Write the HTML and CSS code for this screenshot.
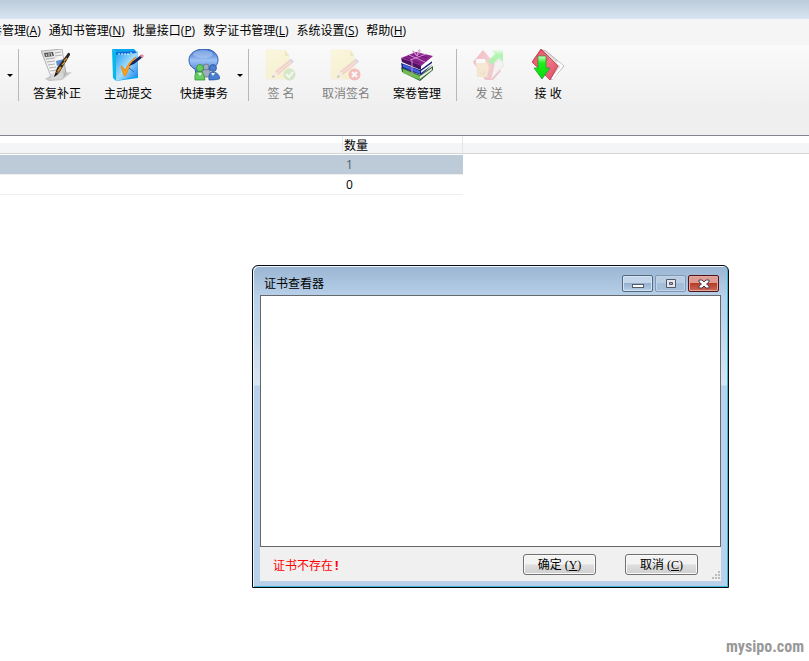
FILE: index.html
```
<!DOCTYPE html>
<html lang="zh-CN">
<head>
<meta charset="utf-8">
<title>证书查看器</title>
<link rel="stylesheet" href="styles.css">
</head>
<body>
<svg class="defs" aria-hidden="true">
  <defs>
    <linearGradient id="paper" x1="0" y1="0" x2="1" y2="1"><stop offset="0" stop-color="#d4d4d4"/><stop offset=".55" stop-color="#f8f8f8"/><stop offset="1" stop-color="#a8a8a8"/></linearGradient>
    <linearGradient id="blue" x1="0" y1="0" x2="1" y2="1"><stop offset="0" stop-color="#1a9cf4"/><stop offset=".5" stop-color="#a3dcfc"/><stop offset="1" stop-color="#0878e8"/></linearGradient>
    <linearGradient id="bubble" x1="0" y1="0" x2="0" y2="1"><stop offset="0" stop-color="#2c62c4"/><stop offset=".45" stop-color="#9fc2f4"/><stop offset="1" stop-color="#3a72d0"/></linearGradient>
    <linearGradient id="note" x1="0" y1="0" x2="1" y2="1"><stop offset="0" stop-color="#fff3a0"/><stop offset="1" stop-color="#fbe27c"/></linearGradient>
    <linearGradient id="green" x1="0" y1="0" x2="0" y2="1"><stop offset="0" stop-color="#d4fbd0"/><stop offset=".3" stop-color="#1ff01c"/><stop offset="1" stop-color="#04d80a"/></linearGradient>
    <linearGradient id="red" x1="0" y1="0" x2="1" y2="1"><stop offset="0" stop-color="#d8283c"/><stop offset=".5" stop-color="#f0788a"/><stop offset="1" stop-color="#d8485c"/></linearGradient>
    <g id="signed-note">
      <path d="M1 1h19l4 5v24H1z" fill="url(#note)" stroke="#f1dc8c" stroke-width=".6"/>
      <path d="M20 1v6h4z" fill="#d9bd56"/>
      <path d="M7 29l3-7L25 10l3 3L13 26z" fill="#f5a080"/>
      <path d="M11 23L26 11M13 25L28 13" stroke="#b86848" stroke-width=".8"/>
      <path d="M7 29l3-7 3 4z" fill="#f5ddc0"/><path d="M7 29l1-3 2 1.600z" fill="#444"/>
      <path d="M24 11l2-1.500 3 3-2 1.500z" fill="#8e98b8"/>
    </g>
  </defs>
</svg>

<div class="app">
  <header class="caption"></header>
  <nav class="menu" aria-label="主菜单">
    <a href="#">案卷管理(<u>A</u>)</a>
    <a href="#">通知书管理(<u>N</u>)</a>
    <a href="#">批量接口(<u>P</u>)</a>
    <a href="#">数字证书管理(<u>L</u>)</a>
    <a href="#">系统设置(<u>S</u>)</a>
    <a href="#">帮助(<u>H</u>)</a>
  </nav>

  <div class="toolbar" role="toolbar">
    <button class="arrow" type="button" aria-label="更多"></button>
    <span class="rule"></span>
    <button class="tool" type="button">
      <svg viewBox="0 0 32 32"><path d="M4 30L12 25 31 23 21 31 8 32z" fill="#aaa" opacity=".6"/><path d="M0 2L21 0 25 24 22 28 9 31Q11 29 9 25z" fill="url(#paper)" stroke="#999" stroke-width=".7"/><path d="M9 25L22 24Q24 28 20 30L8 31Q11 29 9 25" fill="#d8d8d8"/><path d="M3 4l9-1 1 4-9 1z" fill="#555"/><path d="M5 5l1 2M8 4v3M10 4l1 3" stroke="#ddd"/><path d="M14 4l6-1M14 7l7-1M5 10l9-1M6 13l8-1M7 16l7-1M8 19l7-1M9 22l8-1" stroke="#aaa" stroke-width=".9"/><path d="M15 12l8-2 1 4-8 3z" fill="#5d8ccc"/><path d="M13 28l3-9L27 4q2-1 2 2L18 24z" fill="#282420"/><path d="M15 24l4-7 2 2-4 6z" fill="#8a6228"/><path d="M21 16l3-3M23 12l3-3M17 22l3-4" stroke="#e29a32" stroke-width="1.400"/><path d="M13 28l2-4 2 1z" fill="#111"/></svg>
      <span>答复补正</span>
    </button>
    <button class="tool" type="button">
      <svg viewBox="0 0 32 32"><path d="M0 0l4 3v29l-3-3z" fill="#06b8ec"/><path d="M0 0h22l4 4v25L4 32V3z" fill="#06a7ee"/><path d="M4 3l22-1v25L4 32z" fill="url(#blue)"/><path d="M4 3l19-1 2 2-21 2z" fill="#096cd8"/><path d="M7 4v2M10 4v2M13 4v2M16 4v2M19 3v2" stroke="#fff"/><path d="M9 17q3 1 4 5Q17 12 24 8 17 15 14 26q-1 2-2 0Q10 21 9 17z" fill="#fba41c" stroke="#f08a10"/><path d="M17 17l3-4L29 6l2 2-9 7z" fill="#16255c"/><path d="M28 7l2-2 2 2-2 2z" fill="#e88896"/><path d="M17 19l5 4" stroke="#2468b4"/></svg>
      <span>主动提交</span>
    </button>
    <button class="tool tool-menu" type="button">
      <svg viewBox="0 0 32 32"><path d="M16 0C7 0 1 5 1 11c0 5 3 8 6 9l1 5 6-3c10 0 16-5 16-11S25 0 16 0z" fill="url(#bubble)" stroke="#315fb8"/><ellipse cx="15" cy="5" rx="10" ry="4" fill="#b7d0f6" opacity=".55"/><g stroke-width=".7"><g fill="#a0adc0" stroke="#566884"><path d="M14 28q-1-8 4-8t5 8z"/><circle cx="18" cy="18" r="3"/></g><g fill="#68cd60" stroke="#268b28"><path d="M7 31q-1-9 4-9t6 9z"/><circle cx="12" cy="19" r="3.500"/></g><g fill="#4a7ed0" stroke="#224f9c"><path d="M21 31q-1-8 4-8t7 6q0 2-11 2z"/><circle cx="25" cy="19" r="3.500"/></g></g><path d="M10 24l2 3 2-3M23 24l2 3 2-3" fill="#eaf6f4"/></svg>
      <span>快捷事务</span>
    </button>
    <button class="arrow arrow-joined" type="button" aria-label="快捷事务菜单"></button>
    <span class="rule"></span>
    <button class="tool" type="button" disabled>
      <svg viewBox="0 0 32 32"><use href="#signed-note"/><circle cx="24.500" cy="25.500" r="6" fill="#8cc860"/><path d="M21 25l3 3 4-5" fill="none" stroke="#fff" stroke-width="2"/></svg>
      <span>签 名</span>
    </button>
    <button class="tool" type="button" disabled>
      <svg viewBox="0 0 32 32"><use href="#signed-note"/><circle cx="24.500" cy="25.500" r="6" fill="#ee4038"/><path d="M22 23l5 5m0-5l-5 5" stroke="#fff" stroke-width="2.200"/></svg>
      <span>取消签名</span>
    </button>
    <button class="tool" type="button">
      <svg viewBox="0 0 32 32"><path d="M0 18l19 8 13-9v4l-13 11L1 23z" fill="#28662a"/><path d="M19 27l12-8v2l-12 9z" fill="#ece8dc"/><path d="M2 20l17 7v4L2 24z" fill="#72bc54"/><path d="M0 14l19 7 12-9v4L20 26 1 19z" fill="#17227c"/><path d="M20 22l11-8v2l-11 8z" fill="#f4f0e4"/><path d="M2 15l17 7v3L2 18z" fill="#4060dc"/><path d="M0 9l20 7v5L1 13z" fill="#4b1260"/><path d="M20 17l11-8v3l-11 8z" fill="#fff"/><path d="M0 9L15 3l17 4-12 10z" fill="#8b258c"/><path d="M4 9l14 5M7 7l16 5M14 5l12 4" stroke="#681478"/><path d="M8 6l16 7M25 5L9 11M16 7Q10 1 12 2q2 1 4 5Q17 0 19 1q1 2-3 6" fill="none" stroke="#d68ed4"/><path d="M11 11v15" stroke="#d58ace"/></svg>
      <span>案卷管理</span>
    </button>
    <span class="rule"></span>
    <button class="tool" type="button" disabled>
      <svg viewBox="0 0 32 32"><path d="M0 13L10 1l18 21-8 9h-8z" fill="url(#red)"/><path d="M18 30l13-14-5-6-4 5" fill="#f4e9ea" stroke="#d8b8bc"/><path d="M3 10h9q3 5 4 9l-2 9H4z" fill="#f5c680"/><path d="M3 10h9v4H3z" fill="#fff"/><path d="M7 24q4 3 5-2" fill="none" stroke="#c99340"/><path d="M18 1h12v12l-4-4-7 7-4-4 7-7z" fill="url(#green)"/></svg>
      <span>发 送</span>
    </button>
    <button class="tool" type="button">
      <svg viewBox="0 0 32 32"><path d="M10 1l4 1 18 15-12 14-6-5z" fill="#ddd" stroke="#aaa" stroke-width=".8"/><path d="M20 30l10-13-5-4" fill="none" stroke="#fff" stroke-width="2"/><path d="M0 13L9 0l17 17-8 14z" fill="url(#red)" stroke="#b82c42" stroke-width=".7"/><path d="M1 13L9 2l8 8-9 11z" fill="#ec6074"/><path d="M6 7h8v12h4l-8 11L2 19h4z" fill="url(#green)" stroke="#21952a" stroke-width=".7"/></svg>
      <span>接 收</span>
    </button>
  </div>

  <table class="grid">
    <colgroup><col class="col-name"><col class="col-count"><col></colgroup>
    <thead><tr><th></th><th>数量</th><th></th></tr></thead>
    <tbody>
      <tr class="selected"><td></td><td>1</td><td></td></tr>
      <tr><td></td><td>0</td><td></td></tr>
    </tbody>
  </table>
  <footer class="mark">mysipo.com</footer>
</div>

<section class="dialog" role="dialog" aria-labelledby="dialog-title">
  <div class="dialog-head">
    <h1 id="dialog-title">证书查看器</h1>
    <button class="win" type="button" aria-label="最小化"><svg viewBox="0 0 14 10"><rect x="1.500" y="5.500" width="11" height="3" fill="#fff" stroke="#555b66"/></svg></button>
    <button class="win faint" type="button" aria-label="最大化"><svg viewBox="0 0 14 10"><path d="M2.500.5h9v8h-9z" fill="#e8e8ec" stroke="#505868"/><path d="M5.500 3.500h3v2h-3z" fill="#9cb8d8" stroke="#505868"/></svg></button>
    <button class="win close" type="button" aria-label="关闭"><svg viewBox="0 0 14 10"><path d="M2 1h3l2 2 2-2h3v2L9.500 5 12 7v2H9L7 7 5 9H2V7l2.500-2L2 3z" fill="#fff" stroke="#4c3c4c"/></svg></button>
  </div>
  <div class="client">
    <div class="list"></div>
    <div class="actions">
      <p>证书不存在<b>!</b></p>
      <button type="button">确定 (<u>Y</u>)</button>
      <button type="button">取消 (<u>C</u>)</button>
      <svg class="grip" viewBox="0 0 8 8"><path d="M6 0h2v2H6zM3 3h2v2H3zM6 3h2v2H6zM0 6h2v2H0zM3 6h2v2H3zM6 6h2v2H6z" fill="#bcbcbc"/></svg>
    </div>
  </div>
</section>
</body>
</html>
```
FILE: styles.css
```
* { box-sizing: border-box; }

body {
  margin: 0;
  overflow: hidden;
  background: #fff;
  color: #000;
  font: 12px/16px "Open Sans", "Noto Sans CJK SC", sans-serif;
}

button {
  margin: 0;
  padding: 0;
  border: 0;
  background: none;
  color: inherit;
  font: inherit;
}

svg { display: block; }
.defs { position: absolute; width: 0; height: 0; }

.app {
  display: flex;
  flex-direction: column;
  min-height: 100vh;
}

.caption {
  height: 19px;
  background: linear-gradient(#bccbda, #d7e4f1);
}

.menu {
  display: flex;
  gap: 8px;
  height: 26px;
  padding-top: 4px;
  margin-left: -22px;
  background: #f5f5f5;
  white-space: nowrap;
}

.menu a { color: inherit; text-decoration: none; }

.toolbar {
  display: flex;
  align-items: flex-start;
  gap: 7px;
  height: 91px;
  padding: 4px 0 0 7px;
  border-bottom: 1px solid #858190;
  background: linear-gradient(#fafafa, #efefef 70%);
}

.tool {
  display: flex;
  flex-direction: column;
  align-items: center;
  gap: 5px;
  padding: 0 8px;
  min-width: 52px;
  white-space: nowrap;
}

.tool svg { width: 32px; height: 32px; }
.tool-menu { margin-left: 5px; }
.tool:disabled { color: #808080; }
.tool:disabled svg { opacity: .3; }

.rule {
  width: 1px;
  height: 52px;
  margin-right: -1px;
  background: #b8b8b8;
}

.arrow {
  width: 6px;
  height: 52px;
  margin-right: -2px;
}

.arrow::before {
  content: "";
  display: block;
  border: 3px solid transparent;
  border-top-color: #000;
  border-bottom: 0;
}

.arrow-joined { margin-left: -6px; }

.grid {
  width: 100%;
  table-layout: fixed;
  border-collapse: separate;
  border-spacing: 0;
}

.col-name { width: 343px; }
.col-count { width: 120px; }

.grid th {
  height: 18px;
  padding: 2px 1px 0;
  border-right: 1px solid #e4e5e8;
  border-bottom: 1px solid #d5d5d5;
  background: linear-gradient(#fff 40%, #f4f5f7 41%);
  font-weight: normal;
  line-height: 15px;
  text-align: left;
}

.grid th:last-child { border-right: 0; }

.grid td {
  height: 20px;
  padding: 0 3px;
  border-bottom: 1px solid #efefef;
}

.grid td:last-child { border-bottom: 0; }
.grid .selected td {
  height: 21px;
  border-top: 1px solid #fff;
  background: #bdcad8;
  color: #4f6262;
}
.grid .selected td:last-child { background: none; }

.mark {
  margin-top: auto;
  padding: 0 5px 4px;
  color: #999;
  font: bold 16px/20px "Liberation Sans Narrow", "Roboto Condensed", "DejaVu Sans Condensed", sans-serif;
  text-align: right;
}

.dialog {
  position: absolute;
  left: 252px;
  top: 265px;
  width: 477px;
  padding: 0 6px 6px;
  border: 1px solid #080c10;
  border-radius: 6px 6px 0 0;
  background: linear-gradient(#9ab5d2, #b8d0e9 30px, #bdd4ea 50px, #d8e6f3 119px, #b9d1ea 120px);
  box-shadow: inset 1px 1px #eaf5fc, inset -1px -1px #3cb8d4;
}

.dialog-head {
  display: flex;
  gap: 2px;
  height: 29px;
  padding: 9px 3px 0 5px;
}

.dialog-head h1 {
  flex: 1;
  margin: 0;
  font-size: 12px;
  line-height: 18px;
  font-weight: normal;
}

.win {
  display: flex;
  align-items: center;
  justify-content: center;
  width: 31px;
  height: 17px;
  border: 1px solid #53677f;
  border-radius: 2px;
  background: linear-gradient(#c4d7ea 45%, #94b0ce 50%, #b9d0e7);
  box-shadow: inset 0 0 0 1px #d4e4f3;
}

.win svg { width: 14px; height: 10px; }
.faint { border-color: #8299b3; background: linear-gradient(#b8cde2 45%, #a5bfda 50%); box-shadow: inset 0 0 0 1px #bfd4e9; }
.close { border-color: #50131b; background: linear-gradient(#dd9b91 45%, #b83d29 50%, #c96a55); box-shadow: inset 0 0 0 1px #e2a79e; }

.client {
  margin: 0 1px;
  background: #f0f0f0;
}

.list {
  height: 252px;
  border: 1px solid #66696b;
  background: #fff;
}

.actions {
  display: flex;
  align-items: center;
  gap: 29px;
  height: 34px;
  padding: 1px 23px 0 13px;
  position: relative;
}

.actions p {
  flex: 1;
  margin: 0;
  padding-top: 2px;
  color: #f00;
}

.actions b { padding-left: 2px; }

.actions button {
  width: 73px;
  height: 21px;
  border: 1px solid #707070;
  border-radius: 3px;
  background: linear-gradient(#f3f3f3 48%, #dedede 52%, #cfcfcf);
  box-shadow: inset 0 0 0 1px #fafafa;
  font-family: "Liberation Serif", "Noto Sans CJK SC", serif;
  line-height: 18px;
}

.grip {
  position: absolute;
  right: 1px;
  bottom: 2px;
  width: 8px;
  height: 8px;
}
```
